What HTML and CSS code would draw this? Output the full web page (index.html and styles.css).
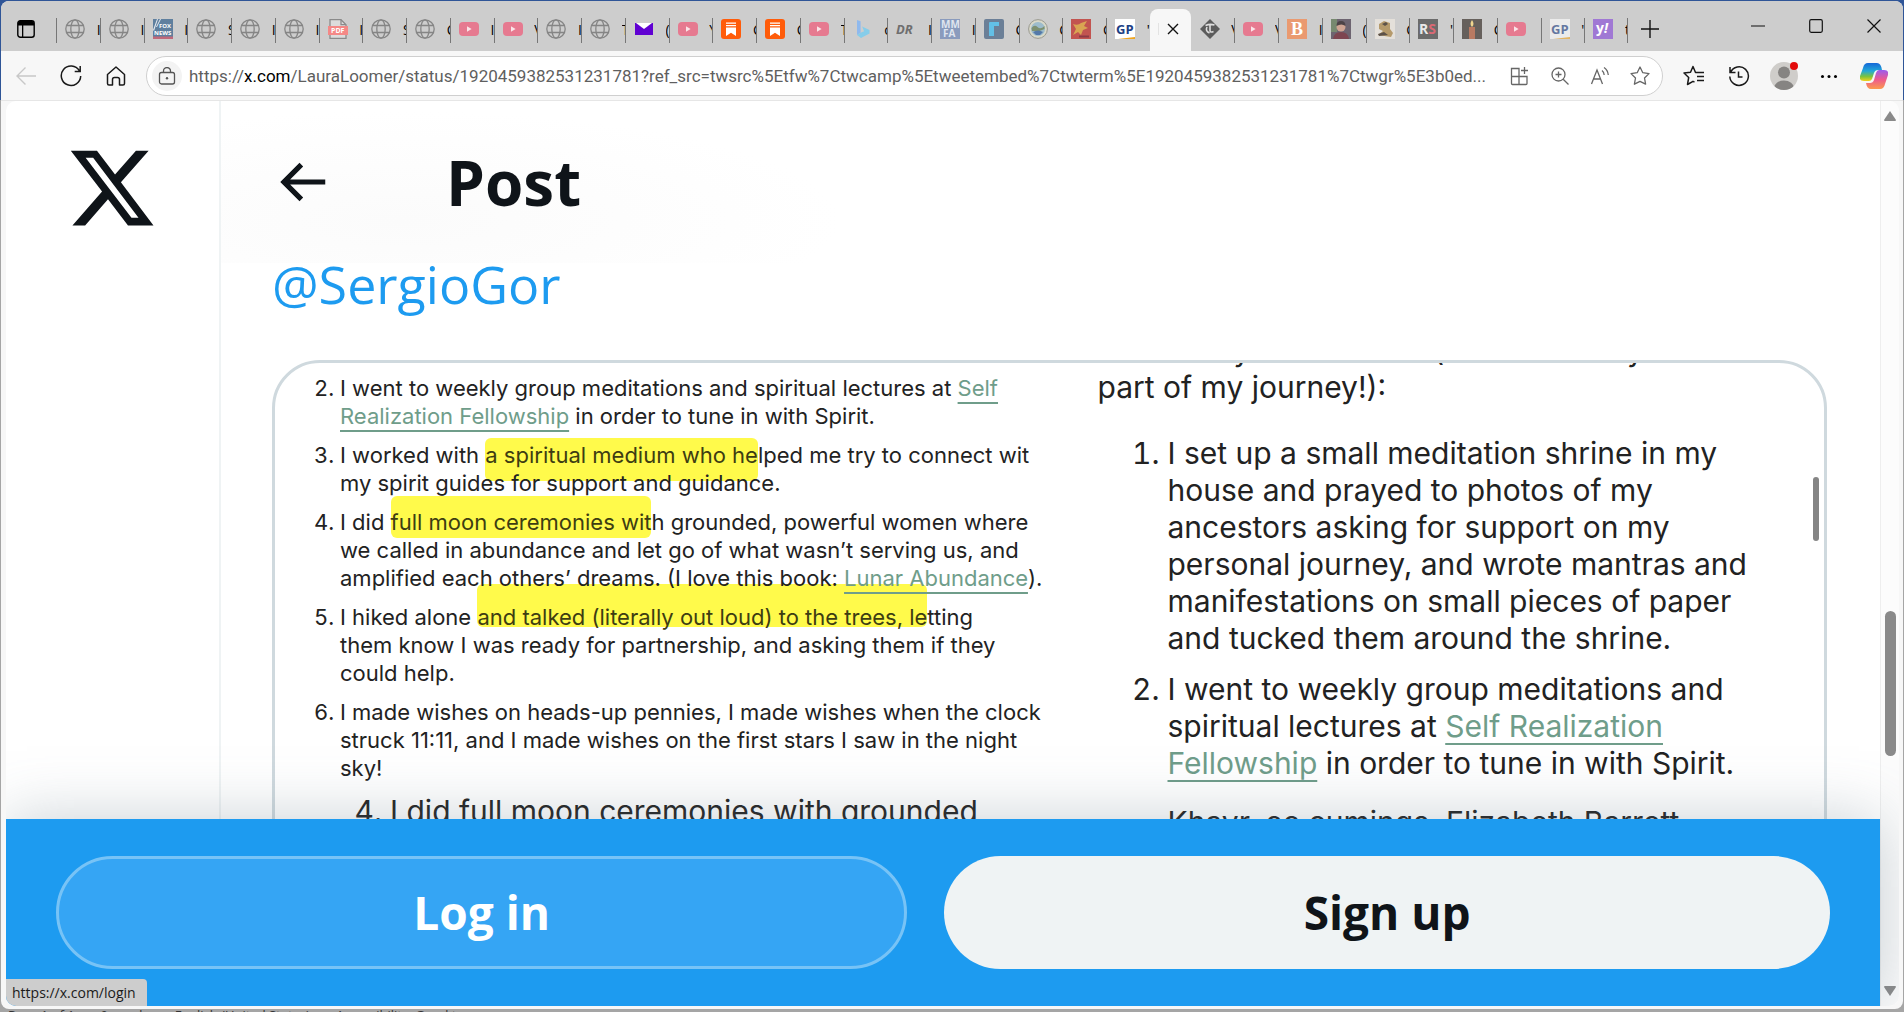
FILE: index.html
```
<!DOCTYPE html>
<html lang="en">
<head>
    <meta charset="UTF-8">
    <meta name="viewport" content="width=device-width, initial-scale=1.0">
    <title>Post / X</title>
    <link rel="stylesheet" href="styles.css">
</head>
<body>
    <svg class="sprite" aria-hidden="true">
        <symbol id="globe" viewBox="0 0 20 20">
            <g fill="none" stroke="#858585" stroke-width="1.3">
                <circle cx="10" cy="10" r="9.2"/>
                <ellipse cx="10" cy="10" rx="4.2" ry="9.2"/>
                <path d="M1.6 6.5h16.8M1.6 13.5h16.8"/>
            </g>
        </symbol>
        <symbol id="youtube" viewBox="0 0 20 20">
            <rect y="3" width="20" height="14" rx="4" fill="#e67a90"/>
            <path d="M8 7.3v5.4l4.6-2.7z" fill="#fbe4e8"/>
        </symbol>
        <symbol id="substack" viewBox="0 0 20 20">
            <rect width="20" height="20" rx="3" fill="#ff5c0a"/>
            <path d="M5 3.5h10v1.3H5zM5 6h10v1.3H5zM5 8.5h10V17l-5-3.2L5 17z" fill="#fff"/>
        </symbol>
    </svg>

    <div class="window">
        <div class="tab-strip">
            <button class="tab-actions" aria-label="Tab actions">
                <svg viewBox="0 0 18 18" width="18" height="18"><rect x=".8" y=".8" width="16.4" height="16.4" rx="2.5" fill="none" stroke="#000" stroke-width="1.4"/><path d="M1 3q0-2 2-2h12q2 0 2 2v2.5H1zM5 5h1.3v12H5z"/></svg>
            </button>
            <div class="tabs">
                <button class="tab"><svg><use href="#globe"/></svg><span>I</span></button>
                <button class="tab"><svg><use href="#globe"/></svg><span>I</span></button>
                <button class="tab">
                    <svg viewBox="0 0 20 20">
                        <path d="M0 0h20v20H0z" fill="#5f7f9e"/>
                        <path d="M0 17.5h20V20H0z" fill="#c0697a"/>
                        <path d="M0 11L4 0h1L1 12zM3 8L7 0h1L4 8z" fill="#e3e8ee"/>
                        <text x="6" y="9" font-size="6" font-weight="700" fill="#fff">FOX</text>
                        <text x="1" y="16" font-size="6" font-weight="700" fill="#fff">NEWS</text>
                    </svg><span>I</span>
                </button>
                <button class="tab"><svg><use href="#globe"/></svg><span>S</span></button>
                <button class="tab"><svg><use href="#globe"/></svg><span>I</span></button>
                <button class="tab"><svg><use href="#globe"/></svg><span>I</span></button>
                <button class="tab">
                    <svg viewBox="0 0 20 20">
                        <path d="M2 .7h11l5 5v13.600H2z" fill="#dcdcdc" stroke="#8a8a8a" stroke-width="1.3"/>
                        <path d="M13 .7v5h5" fill="none" stroke="#8a8a8a" stroke-width="1.3"/>
                        <path d="M0 7h20v9H0z" fill="#f48886"/>
                        <text x="3" y="14" font-size="7" font-weight="700" fill="#fff">PDF</text>
                    </svg><span>I</span>
                </button>
                <button class="tab"><svg><use href="#globe"/></svg><span>S</span></button>
                <button class="tab"><svg><use href="#globe"/></svg><span>C</span></button>
                <button class="tab"><svg><use href="#youtube"/></svg><span>I</span></button>
                <button class="tab"><svg><use href="#youtube"/></svg><span>V</span></button>
                <button class="tab"><svg><use href="#globe"/></svg><span>I</span></button>
                <button class="tab"><svg><use href="#globe"/></svg><span>T</span></button>
                <button class="tab">
                    <svg viewBox="0 0 20 20">
                        <path d="M1 4h18v12H1z" fill="#6001d2"/>
                        <path d="M2 4h16l-8 6z" fill="#fff"/>
                    </svg><span>(</span>
                </button>
                <button class="tab"><svg><use href="#youtube"/></svg><span>Y</span></button>
                <button class="tab"><svg><use href="#substack"/></svg><span>C</span></button>
                <button class="tab"><svg><use href="#substack"/></svg><span>C</span></button>
                <button class="tab"><svg><use href="#youtube"/></svg><span>T</span></button>
                <button class="tab">
                    <svg viewBox="0 0 20 20">
                        <path d="M4 1l3.600 1.300v11.500L4 16z" fill="#8fb9ee"/>
                        <path d="M4 16l3.600-2.200 3.500-1.600-2-4.600L16.500 11v3.500L8 19z" fill="#86cdea"/>
                    </svg><span>c</span>
                </button>
                <button class="tab">
                    <svg viewBox="0 0 20 20"><text x="0" y="15" font-size="13" font-weight="700" font-style="italic" fill="#6f6f6f">DR</text></svg><span>I</span>
                </button>
                <button class="tab">
                    <svg viewBox="0 0 20 20">
                        <path d="M0 0h20v20H0z" fill="#8a9bbd"/>
                        <text x="1" y="9" font-size="10" font-weight="700" fill="#dfe5ef">MM</text>
                        <text x="3" y="18" font-size="10" font-weight="700" fill="#dfe5ef">FA</text>
                    </svg><span>I</span>
                </button>
                <button class="tab">
                    <svg viewBox="0 0 20 20">
                        <rect width="20" height="20" rx="2" fill="#6b7f97"/>
                        <path d="M5 4q0-1 1-1h9v4h-5v10H5z" fill="#62bfe6"/>
                    </svg><span>C</span>
                </button>
                <button class="tab">
                    <svg viewBox="0 0 20 20">
                        <circle cx="10" cy="10" r="9.4" fill="#d9d9c9" stroke="#9a9a90"/>
                        <circle cx="10" cy="10" r="7" fill="#9dbccb"/>
                        <path d="M3.500 9q3-4 6-1t7-1v3l-5 2H4z" fill="#7e9170"/>
                        <path d="M5 13q5-3 10 0l-3 3H8z" fill="#5479a8"/>
                    </svg><span>C</span>
                </button>
                <button class="tab">
                    <svg viewBox="0 0 20 20">
                        <path d="M0 0h20v20H0z" fill="#c25450"/>
                        <path d="M2 5q5 2 8-1l6-2-3 5 4 2-5 2-2 5-3-3-5 3 3-6z" fill="#d9a552"/>
                        <path d="M8 16.500h10v2H8z" fill="#8d3a45"/>
                    </svg><span>C</span>
                </button>
                <button class="tab">
                    <svg viewBox="0 0 20 20">
                        <path d="M0 0h20v20H0z" fill="#fff"/>
                        <path d="M3 20l17-2v2z" fill="#f0a51e"/>
                        <text x="1" y="15" font-size="13" font-weight="700" fill="#1d3f85">GP</text>
                    </svg><span>'</span>
                </button>
                <button class="tab active" aria-label="Close tab">
                    <svg viewBox="0 0 20 20"><path d="M5 5l10 10M15 5L5 15" stroke="#111" stroke-width="1.4"/></svg>
                </button>
                <button class="tab">
                    <svg viewBox="0 0 20 20">
                        <path d="M10 0l10 10-10 10L0 10z" fill="#5c5c5c"/>
                        <path d="M5.500 6.500q4.500-2 9-.5M10 6v5.500q0 2.500 3.500 1M7 8q-2 4 2.500 6" fill="none" stroke="#ddd" stroke-width="1.6"/>
                    </svg><span>V</span>
                </button>
                <button class="tab"><svg><use href="#youtube"/></svg><span>V</span></button>
                <button class="tab">
                    <svg viewBox="0 0 20 20">
                        <path d="M0 0h20v20H0z" fill="#ea9a70"/>
                        <text class="slab" x="4" y="16" font-size="18" font-weight="700" fill="#fff">B</text>
                    </svg><span>I</span>
                </button>
                <button class="tab">
                    <svg viewBox="0 0 20 20">
                        <path d="M0 0h20v20H0z" fill="#6d6470"/>
                        <path d="M0 0h6v13H0z" fill="#77896f"/>
                        <path d="M2 20q1-7 8-7t8 7z" fill="#7d4550"/>
                        <circle cx="10" cy="8" r="4.500" fill="#cfa493"/>
                        <path d="M5.500 7q0-5 4.500-5t4.500 5q-4-3-9 0z" fill="#4d4347"/>
                    </svg><span>(</span>
                </button>
                <button class="tab">
                    <svg viewBox="0 0 20 20">
                        <path d="M0 0h20v20H0z" fill="#e4e0da"/>
                        <path d="M4 5l5-3 6 2v6l3 4-2 4-13-2 5-4-4-2z" fill="#b59a6b"/>
                        <path d="M7 5l4-2 2 2-3 2zM3 15l6-2 4 3-9 1z" fill="#5c5249"/>
                    </svg><span>C</span>
                </button>
                <button class="tab">
                    <svg viewBox="0 0 20 20">
                        <path d="M0 0h20v20H0z" fill="#6b6b6b"/>
                        <text x="1" y="15" font-size="14" font-weight="700"><tspan fill="#e8e8e8">R</tspan><tspan fill="#db6874">S</tspan></text>
                    </svg><span>'</span>
                </button>
                <button class="tab">
                    <svg viewBox="0 0 20 20">
                        <path d="M0 0h20v20H0z" fill="#66605c"/>
                        <path d="M7 8h6v12H7z" fill="#b97a62"/>
                        <path d="M10 1q3 4 0 7-3-3 0-7z" fill="#f0d58e"/>
                    </svg><span>C</span>
                </button>
                <button class="tab"><svg><use href="#youtube"/></svg><span></span></button>
                <button class="tab">
                    <svg class="faded" viewBox="0 0 20 20">
                        <path d="M0 0h20v20H0z" fill="#fff"/>
                        <path d="M3 20l17-2v2z" fill="#f0a51e"/>
                        <text x="1" y="15" font-size="13" font-weight="700" fill="#1d3f85">GP</text>
                    </svg><span>'</span>
                </button>
                <button class="tab last">
                    <svg viewBox="0 0 20 20">
                        <path d="M0 0h20v20H0z" fill="#a078d4"/>
                        <text x="3" y="14" font-size="14" font-weight="700" fill="#fff">y<tspan font-style="italic">!</tspan></text>
                    </svg><span>t</span>
                </button>
            </div>
            <button class="new-tab" aria-label="New tab">
                <svg viewBox="0 0 18 18" width="18" height="18"><path d="M9 0v18M0 9h18" stroke="#111" stroke-width="1.4"/></svg>
            </button>
            <div class="window-controls">
                <button aria-label="Minimize"><svg viewBox="0 0 14 14"><path d="M0 7h14" stroke="#111" stroke-width="1.2"/></svg></button>
                <button aria-label="Maximize"><svg viewBox="0 0 14 14"><rect x=".7" y=".7" width="12.6" height="12.6" rx="1.5" fill="none" stroke="#111" stroke-width="1.2"/></svg></button>
                <button aria-label="Close"><svg viewBox="0 0 14 14"><path d="M.5.5l13 13M13.500.5l-13 13" stroke="#111" stroke-width="1.2"/></svg></button>
            </div>
        </div>

        <div class="toolbar">
            <div class="nav-buttons">
                <button aria-label="Back" disabled><svg viewBox="0 0 22 22"><path d="M21 11H2M10.500 2.500L2 11l8.500 8.500" fill="none" stroke="#c8c8c8" stroke-width="1.4"/></svg></button>
                <button aria-label="Refresh"><svg viewBox="0 0 22 22"><path d="M19.300 5.700A9.700 9.700 0 1 0 20.700 11M20.200 1v5.500h-5.500" fill="none" stroke="#1a1a1a" stroke-width="1.5"/></svg></button>
                <button aria-label="Home"><svg viewBox="0 0 22 22"><path d="M2.500 9.500L11 2l8.500 7.500v9q0 1.500-1.500 1.500h-3.500v-5.500q0-2-2-2h-3q-2 0-2 2V20H4q-1.500 0-1.500-1.500z" fill="none" stroke="#1a1a1a" stroke-width="1.5" stroke-linejoin="round"/></svg></button>
            </div>
            <div class="address-bar">
                <button class="site-info" aria-label="Site information"><svg viewBox="0 0 18 18" width="18" height="18"><rect x="1.5" y="5.5" width="15" height="11.5" rx="2" fill="none" stroke="#555" stroke-width="1.3"/><path d="M5.500 5.500V4a3.500 3.500 0 0 1 7 0v1.500" fill="none" stroke="#555" stroke-width="1.3"/><circle cx="9" cy="11.3" r="1.2" fill="#555"/></svg></button>
                <div class="url">https://<b>x.com</b>/LauraLoomer/status/1920459382531231781?ref_src=twsrc%5Etfw%7Ctwcamp%5Etweetembed%7Ctwterm%5E1920459382531231781%7Ctwgr%5E3b0ed...</div>
                <div class="address-actions">
                    <button aria-label="Apps"><svg viewBox="0 0 20 20"><path d="M1.500 2.500h7.500v16H2.500q-1 0-1-1zM1.500 10.500H17v7q0 1-1 1H9M14.500 1v7M11 4.500h7" fill="none" stroke="#666" stroke-width="1.3"/></svg></button>
                    <button aria-label="Zoom"><svg viewBox="0 0 20 20"><circle cx="8.5" cy="8.5" r="6.5" fill="none" stroke="#666" stroke-width="1.3"/><path d="M13.200 13.200l5.300 5.300M8.500 5.500v6M5.500 8.500h6" stroke="#666" stroke-width="1.3"/></svg></button>
                    <button aria-label="Read aloud"><svg viewBox="0 0 20 20"><path d="M1.500 18L7 4l5.500 14M3.300 13h7.400M12 4.500q2 1.500 2.200 4.500M14 1.500q3.800 2.500 4.300 7.500" fill="none" stroke="#666" stroke-width="1.3"/></svg></button>
                    <button aria-label="Add to favorites"><svg viewBox="0 0 20 20"><path d="M10 1l2.800 5.700 6.200.9-4.500 4.400 1.100 6.200L10 15.300l-5.600 2.900L5.500 12 1 7.600l6.200-.9z" fill="none" stroke="#666" stroke-width="1.3" stroke-linejoin="round"/></svg></button>
                </div>
            </div>
            <div class="tool-buttons">
                <button aria-label="Favorites"><svg viewBox="0 0 22 22"><path d="M12.500 7.500h8.500M14 11.500h7M14 15.500h7M13 7.500h-.5L10 1.500 7.500 7.200 1 8l4.700 4.500-1.200 7 5.500-3.200 1.500.8" fill="none" stroke="#1a1a1a" stroke-width="1.5" stroke-linejoin="round"/></svg></button>
                <button aria-label="History"><svg viewBox="0 0 22 22"><path d="M2.500 7.500a9.300 9.300 0 1 1-.7 4M2 2v5.500h5.500M10.500 6.500V12h4" fill="none" stroke="#1a1a1a" stroke-width="1.5"/></svg></button>
                <button class="profile" aria-label="Profile"><svg viewBox="0 0 28 28" width="28" height="28"><clipPath id="face"><circle cx="14" cy="14" r="14"/></clipPath><g clip-path="url(#face)"><path d="M0 0h28v28H0z" fill="#cfcdca"/><circle cx="14" cy="10.5" r="6" fill="#868482"/><ellipse cx="14" cy="26" rx="10" ry="7.5" fill="#868482"/></g></svg></button>
                <button aria-label="Settings and more"><svg viewBox="0 0 22 22"><circle cx="4.5" cy="11.5" r="1.5"/><circle cx="11" cy="11.5" r="1.5"/><circle cx="17.5" cy="11.5" r="1.5"/></svg></button>
                <button class="copilot" aria-label="Copilot"><svg viewBox="0 0 28 26" width="28" height="26">
                    <linearGradient id="cool" x2="0" y2="1"><stop stop-color="#1567d8"/><stop offset=".45" stop-color="#22a9d8"/><stop offset=".75" stop-color="#7cc33e"/><stop offset="1" stop-color="#f2d21b"/></linearGradient>
                    <linearGradient id="warm" x2="0" y2="1"><stop stop-color="#9a5cf0"/><stop offset=".5" stop-color="#ee5a8e"/><stop offset="1" stop-color="#fb9a4d"/></linearGradient>
                    <path d="M8 0h9q4 0 5 7h-4q-3 0-4 3l-2 6q-1 2-3 2H4q-5 0-4-5L3 5q1-5 5-5z" fill="url(#cool)"/>
                    <path d="M20 26h-9q-4 0-5-6h4q3 0 4-3l2-7q1-3 3-3h5q5 0 4 5l-3 9q-1 5-5 5z" fill="url(#warm)"/>
                </svg></button>
            </div>
        </div>

        <div class="viewport">
            <div class="page">
                <div class="timeline">
                    <nav class="sidebar">
                        <a href="#" aria-label="X"><svg viewBox="0 0 24 24" width="92" height="92"><path fill="#0f1419" d="M18.244 2.250h3.308l-7.227 8.260 8.502 11.240H16.170l-5.214-6.817L4.990 21.750H1.680l7.730-8.835L1.254 2.250H8.080l4.713 6.231zm-1.161 17.520h1.833L7.084 4.126H5.117z"/></svg></a>
                    </nav>
                    <main class="post">
                        <header class="post-header">
                            <button class="back" aria-label="Back"><svg viewBox="0 0 24 24" width="62" height="62"><path fill="#0f1419" d="M7.414 13l5.043 5.040-1.414 1.420L3.586 12l7.457-7.460 1.414 1.420L7.414 11H21v2H7.414z"/></svg></button>
                            <h1>Post</h1>
                        </header>
                        <p class="post-text"><a href="#">@SergioGor</a></p>
                        <div class="media">
                            <div class="clip small">
                                <ol start="2">
                                    <li>I went to weekly group meditations and spiritual lectures at <a href="#">Self</a><br><a href="#">Realization Fellowship</a> in order to tune in with Spirit.</li>
                                    <li>I worked with <mark class="low">a spiritual medium who he</mark>lped me try to connect wit<br>my spirit guides for support and guidance.</li>
                                    <li>I did <mark class="mid">full moon ceremonies wit</mark>h grounded, powerful women where<br>we called in abundance and let go of what wasn’t serving us, and<br>amplified each others’ dreams. (I love this book: <a href="#">Lunar Abundance</a>).</li>
                                    <li>I hiked alone <mark class="high">and talked (literally out loud) to the trees, le</mark>tting<br>them know I was ready for partnership, and asking them if they<br>could help.</li>
                                    <li>I made wishes on heads-up pennies, I made wishes when the clock<br>struck 11:11, and I made wishes on the first stars I saw in the night<br>sky!</li>
                                </ol>
                                <ol class="next" start="4">
                                    <li>I did full moon ceremonies with grounded</li>
                                </ol>
                            </div>
                            <div class="clip large">
                                <div class="cut-line"><span>y</span><span>(</span><span>y</span></div>
                                <p>part of my journey!):</p>
                                <ol>
                                    <li>I set up a small meditation shrine in my<br>house and prayed to photos of my<br>ancestors asking for support on my<br>personal journey, and wrote mantras and<br>manifestations on small pieces of paper<br>and tucked them around the shrine.</li>
                                    <li>I went to weekly group meditations and<br>spiritual lectures at <a href="#">Self Realization</a><br><a href="#">Fellowship</a> in order to tune in with Spirit.</li>
                                </ol>
                                <p class="poets">Khayr, ee cumings, Elizabeth Barrett</p>
                                <div class="clip-thumb"></div>
                            </div>
                        </div>
                    </main>
                </div>
                <div class="login-bar">
                    <a class="login" href="#">Log in</a>
                    <a class="signup" href="#">Sign up</a>
                </div>
                <div class="link-status">https://x.com/login</div>
            </div>
            <div class="scrollbar">
                <svg viewBox="0 0 12 10" width="12" height="10"><path d="M6 0l6 9q0 1-1 1H1q-1 0-1-1z" fill="#8a8a8a"/></svg>
                <div class="track"><div class="thumb"></div></div>
                <svg viewBox="0 0 12 10" width="12" height="10"><path d="M6 10l6-9q0-1-1-1H1Q0 0 0 1z" fill="#8a8a8a"/></svg>
            </div>
        </div>
    </div>

    <div class="word-status">
        <span>Page 1 of 1</span>
        <span>0 words</span>
        <span>English (United States)</span>
        <span>Accessibility: Good to go</span>
    </div>
</body>
</html>
```

FILE: styles.css
```
* {
    box-sizing: border-box;
}
body {
    margin: 0;
    height: 100vh;
    display: flex;
    flex-direction: column;
    padding: 1px 1px 0;
    overflow: hidden;
    background: linear-gradient(#2f5597 100px, #a5a5a5 100px);
    font-family: "Open Sans", "Noto Sans", sans-serif;
    color: #0f1419;
}
button {
    display: flex;
    align-items: center;
    justify-content: center;
    padding: 0;
    border: 0;
    background: none;
    font-family: inherit;
}
.sprite {
    position: absolute;
    width: 0;
    height: 0;
}
.window {
    flex: 1;
    min-height: 0;
    display: flex;
    flex-direction: column;
    padding-bottom: 3px;
    border-radius: 8px;
    overflow: hidden;
    background: #f7f7f7;
}

/* tabs */
.tab-strip {
    display: flex;
    height: 50px;
    background: #cdcdcd;
}
.tab-actions {
    width: 55px;
    padding-right: 5px;
    padding-top: 6px;
}
.tabs {
    flex: 1;
    display: flex;
    padding-top: 8px;
}
.tab {
    flex: 1 1 0;
    min-width: 0;
    position: relative;
    justify-content: space-between;
    padding-left: 9px;
    padding-bottom: 2px;
    font-size: 14px;
}
.tab::before,
.tab.last::after {
    content: "";
    position: absolute;
    left: 0;
    top: 9px;
    width: 1px;
    height: 25px;
    background: #777;
}
.tab.last::after {
    left: auto;
    right: 0;
}
.tab svg {
    width: 20px;
    height: 20px;
    flex: none;
}
.tab span {
    width: 3px;
    overflow: hidden;
    text-align: left;
    white-space: nowrap;
}
.tab .slab {
    font-family: "Liberation Serif", serif;
}
.tab .faded {
    opacity: 0.6;
}
.tab.active {
    justify-content: center;
    padding-left: 6px;
    border-radius: 8px 8px 0 0;
    background: #f7f7f7;
}
.tab.active::before {
    left: 8px;
    top: 14px;
    height: 12px;
    background: #e3e3e3;
}
.tab.active + .tab::before {
    display: none;
}
.new-tab {
    width: 44px;
    padding-top: 6px;
}
.window-controls {
    display: flex;
    margin-left: 57px;
}
.window-controls button {
    width: 58px;
}
.window-controls svg {
    width: 14px;
    height: 14px;
}

/* toolbar */
.toolbar {
    display: flex;
    align-items: center;
    height: 50px;
    border-bottom: 1px solid #e6e6e6;
}
.nav-buttons {
    display: flex;
    width: 145px;
    padding-left: 2px;
}
.nav-buttons button {
    width: 45px;
}
.nav-buttons svg,
.tool-buttons svg {
    width: 22px;
    height: 22px;
}
.address-bar {
    flex: 1;
    min-width: 0;
    display: flex;
    align-items: center;
    height: 40px;
    padding: 0 2px 0 5px;
    border: 1px solid #cfcfcf;
    border-radius: 20px;
    background: #fff;
}
.site-info {
    width: 30px;
    height: 30px;
    border-radius: 15px;
    background: #f3f3f3;
}
.url {
    flex: 1;
    min-width: 0;
    margin-left: 7px;
    overflow: hidden;
    white-space: nowrap;
    font-family: Roboto, sans-serif;
    font-size: 17px;
    color: #5f5f5f;
}
.url b {
    font-weight: 400;
    color: #000;
}
.address-actions {
    display: flex;
}
.address-actions button {
    width: 40px;
}
.address-actions svg {
    width: 20px;
    height: 20px;
}
.tool-buttons {
    display: flex;
    padding: 0 7px 0 8px;
}
.tool-buttons button {
    width: 45px;
    height: 30px;
}
.profile {
    position: relative;
}
.profile::after {
    content: "";
    position: absolute;
    top: 1px;
    right: 8px;
    width: 8px;
    height: 8px;
    border-radius: 4px;
    background: #e30b0b;
}
.tool-buttons .profile svg,
.tool-buttons .copilot svg {
    width: 28px;
    height: 28px;
}

/* web page */
.viewport {
    flex: 1;
    min-height: 0;
    display: flex;
    margin: 0 4px 0 5px;
    border-radius: 10px;
    overflow: hidden;
    background: #fff;
}
.page {
    flex: 1;
    min-width: 0;
    position: relative;
    display: flex;
    flex-direction: column;
}
.timeline {
    flex: 1;
    min-height: 0;
    display: flex;
    overflow: hidden;
}
.sidebar {
    flex: none;
    width: 215px;
    padding: 41px 0 0 60px;
    border-right: 2px solid #eff3f4;
}
.post {
    flex: 1;
    min-width: 0;
}
.post-header {
    display: flex;
    align-items: center;
    height: 162px;
    padding: 0 0 0 50px;
    background: radial-gradient(ellipse 440px 110px at 180px 120px, #fbfbfb, #fff);
}
.post-header h1 {
    margin: 0 0 0 113px;
    font-size: 62px;
    line-height: 84px;
}
.post-text {
    margin: 0 0 55px;
    padding-left: 51px;
    font-size: 52px;
    line-height: 42px;
}
.post-text a {
    color: #1d9bf0;
    text-decoration: none;
}
.media {
    display: grid;
    grid-template-columns: 1fr 1fr;
    height: 600px;
    margin: 0 53px 0 51px;
    border: 3px solid #cfd9de;
    border-radius: 48px;
    overflow: hidden;
    font-family: Inter, sans-serif;
    color: #222;
}
.clip {
    position: relative;
    isolation: isolate;
    overflow: hidden;
    white-space: nowrap;
}
.clip ol,
.clip p {
    margin: 0;
}
.clip a {
    color: #6f9d8a;
    text-underline-offset: 6px;
    text-decoration-thickness: 2px;
}
.small {
    margin-right: 4px;
    padding-top: 11px;
    font-size: 22px;
    line-height: 28px;
}
.small ol {
    padding-left: 65px;
}
.small li {
    margin-bottom: 11px;
}
.small .next {
    padding-left: 115px;
    font-size: 30px;
    line-height: 37px;
}
mark {
    position: relative;
    background: none;
    color: #3d3d12;
}
mark::before {
    content: "";
    position: absolute;
    z-index: -1;
    border-radius: 6px;
    background: #fffa4b;
}
.low::before {
    inset: -4px 0 -13px;
}
.mid::before {
    inset: -13px 0 -3px;
}
.high::before {
    inset: -20px 0 3px;
}
.large {
    font-size: 30px;
    line-height: 37px;
}
.large p {
    padding-left: 48px;
}
.large ol {
    padding-left: 118px;
    margin: 29px 0 22px;
}
.large li {
    margin-bottom: 14px;
}
.large .poets {
    padding-left: 118px;
}
.cut-line {
    display: flex;
    align-items: flex-end;
    justify-content: space-between;
    height: 6px;
    padding: 0 180px 0 184px;
}
.clip-thumb {
    position: absolute;
    top: 114px;
    right: 5px;
    width: 6px;
    height: 64px;
    border-radius: 3px;
    background: #858585;
}

/* login bar */
.login-bar {
    position: relative;
    display: flex;
    gap: 37px;
    padding: 37px 50px;
    background: #1d9bf0;
    box-shadow: 0 0 60px rgba(101, 119, 134, 0.35);
}
.login-bar a {
    height: 113px;
    border-radius: 57px;
    font-size: 46px;
    font-weight: 700;
    line-height: 113px;
    text-align: center;
    text-decoration: none;
}
.login-bar .login {
    flex: 21 1 0;
    border: 3px solid #77c3f6;
    line-height: 107px;
    background: #35a5f4;
    color: #fff;
}
.login-bar .signup {
    flex: 22 1 0;
    background: #eff3f4;
    color: #0f1419;
}
.link-status {
    position: absolute;
    left: 0;
    bottom: 0;
    width: 141px;
    height: 27px;
    padding-left: 6px;
    border-radius: 0 4px 0 0;
    background: #cdcdcd;
    font-size: 14px;
    line-height: 27px;
    color: #1a1a1a;
}
.scrollbar {
    display: flex;
    flex-direction: column;
    align-items: center;
    width: 19px;
    padding: 10px 0;
    background: #fcfcfc;
    border-left: 1px solid #eee;
}
.track {
    flex: 1;
    display: flex;
    flex-direction: column;
}
.track::before {
    content: "";
    flex: 490;
}
.track::after {
    content: "";
    flex: 230;
}
.thumb {
    flex: 145;
    width: 11px;
    border-radius: 6px;
    background: #8a8a8a;
}

/* status bar of the window behind */
.word-status {
    display: flex;
    gap: 26px;
    height: 3px;
    padding-left: 7px;
    overflow: hidden;
    font-size: 13px;
    line-height: 12px;
    color: #333;
}
```
